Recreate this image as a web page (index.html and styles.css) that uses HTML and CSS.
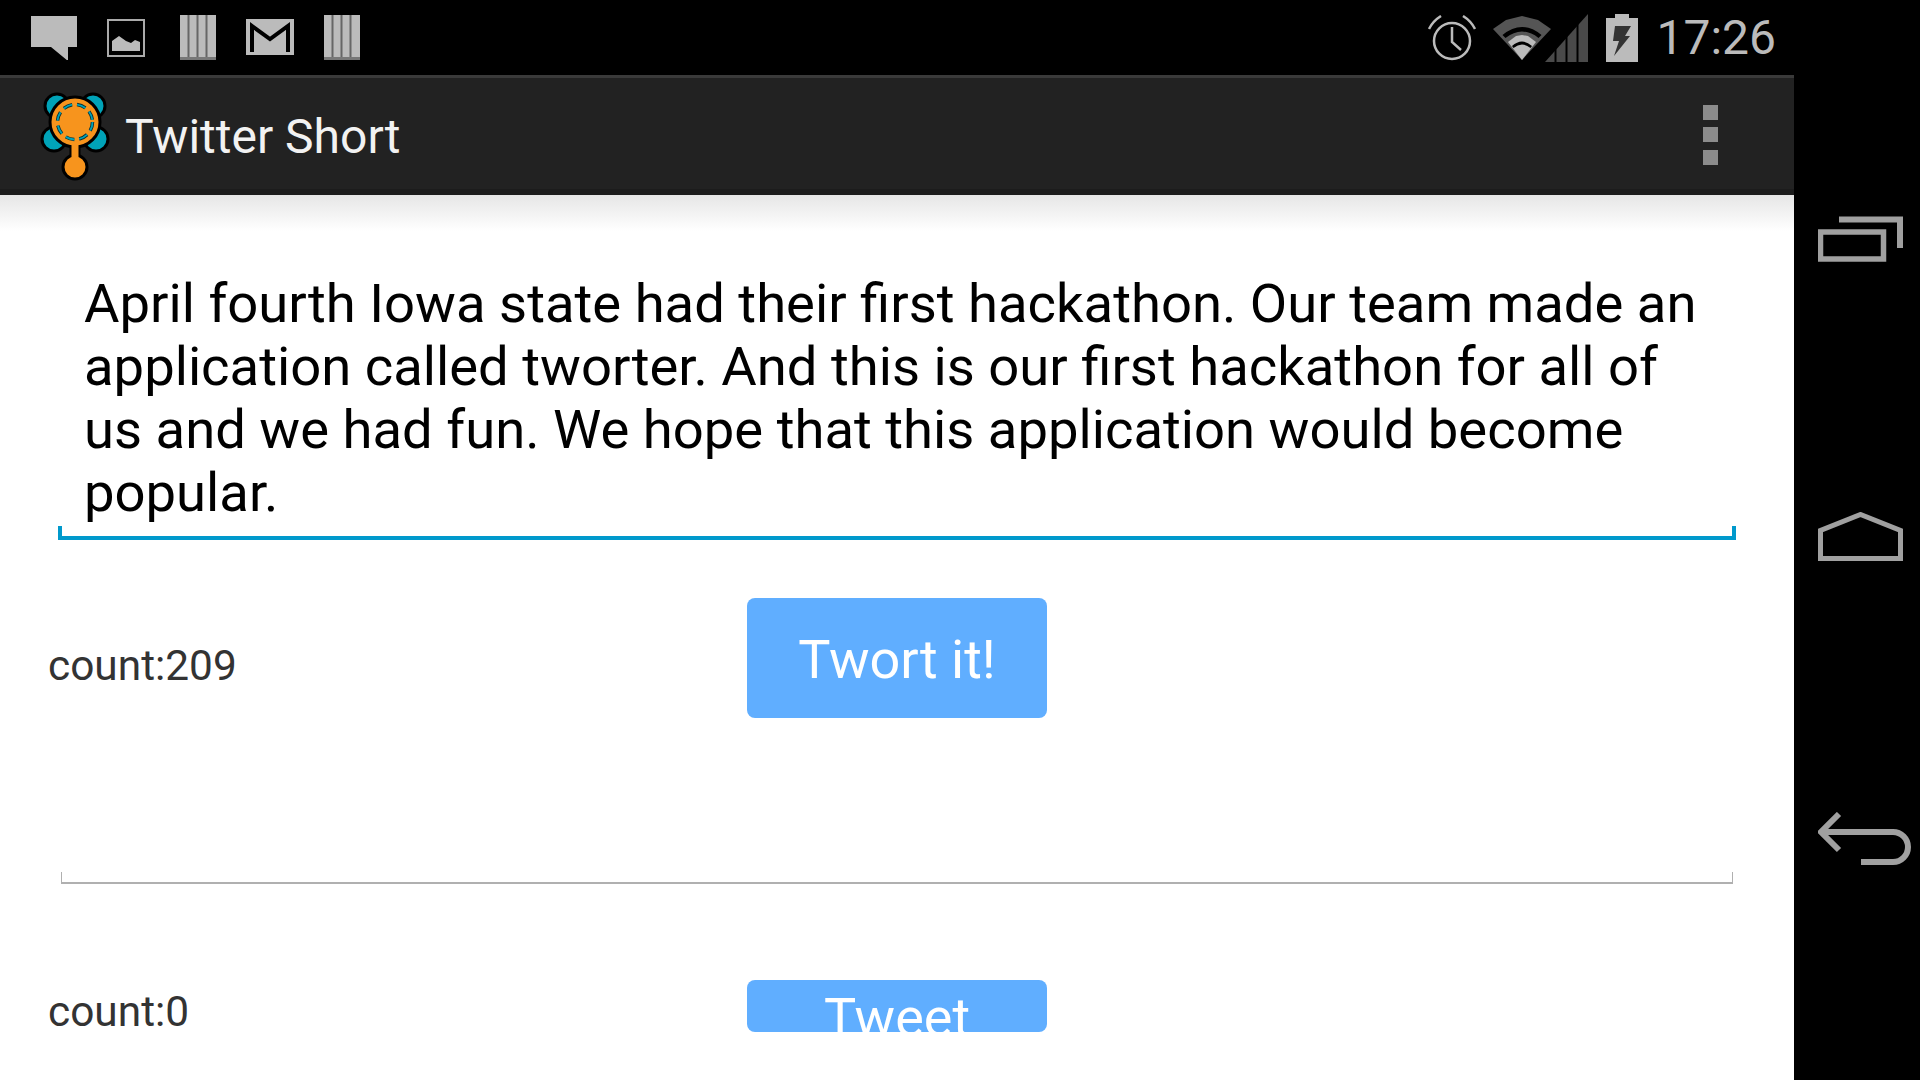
FILE: index.html
```html
<!DOCTYPE html>
<html lang="en">
<head>
    <meta charset="UTF-8">
    <title>Twitter Short</title>
    <link rel="stylesheet" href="styles.css">
</head>
<body>
    <div class="screen">
        <div class="app">
            <header class="status-bar">
                <div class="status-left">
                    <svg class="icon" width="46" height="44" viewBox="0 0 46 44"><polygon points="0,0 46,0 46,31 37,31 37,45 20,31 0,31" fill="#bbb"/></svg>
                    <svg class="icon icon-image" width="38" height="38" viewBox="0 0 38 38"><rect x="1" y="1" width="36" height="36" fill="none" stroke="#aaa" stroke-width="2"/><polygon points="5,32 5,22 12,17 19,22 24,24 28,21 33,23 33,32" fill="#bbb"/></svg>
                    <svg class="icon icon-bars icon-bars-first" width="36" height="45" viewBox="0 0 36 45"><rect width="36" height="45" fill="#bbb"/><path d="M8.5 0V45M17.5 0V45M26.5 0V45" stroke="#666" stroke-width="2"/><rect y="42" width="36" height="3" fill="#777"/></svg>
                    <svg class="icon icon-mail" width="48" height="36" viewBox="0 0 48 36"><rect width="48" height="36" fill="#bbb"/><path d="M6 33V7L24 20L42 7V33" fill="none" stroke="#000" stroke-width="4"/></svg>
                    <svg class="icon icon-bars" width="36" height="45" viewBox="0 0 36 45"><rect width="36" height="45" fill="#bbb"/><path d="M8.5 0V45M17.5 0V45M26.5 0V45" stroke="#666" stroke-width="2"/><rect y="42" width="36" height="3" fill="#777"/></svg>
                </div>
                <div class="status-right">
                    <svg class="icon" width="48" height="46" viewBox="0 0 48 46"><circle cx="24" cy="26" r="18" fill="none" stroke="#bbb" stroke-width="2.5"/><path d="M24 12V27L33 35" fill="none" stroke="#bbb" stroke-width="2.5"/><path d="M1 14Q5 6 13 1M47 14Q43 6 35 1" fill="none" stroke="#bbb" stroke-width="2.5"/></svg>
                    <svg class="icon icon-wifi" width="58" height="44" viewBox="0 0 58 44"><polygon points="0,13 13,4 29,0 45,4 58,13 29,44" fill="#555"/><path d="M9.5 19Q29 3 48.5 19L45.5 22Q29 9 12.5 22Z" fill="#000"/><polygon points="15,26 23,20 29,19 35,20 43,26 29,44" fill="#bbb"/><path d="M19 30Q29 21 39 30L37.500 32Q29 25 20.500 32Z" fill="#000"/></svg>
                    <svg class="icon icon-signal" width="43" height="48" viewBox="0 0 43 48"><polygon points="0,48 43,0 43,48" fill="#4a4a4a"/><path d="M10.500 48V30M21.500 48V20M32.500 48V8" stroke="#000" stroke-width="2"/></svg>
                    <svg class="icon icon-battery" width="32" height="48" viewBox="0 0 32 48"><path d="M9 0H23V4H32V48H0V4H9Z" fill="#bbb"/><polygon points="9,12 25,12 19,22 24,22 8,42 13,27 7,27" fill="#333"/></svg>
                    <span class="clock">17:26</span>
                </div>
            </header>

            <div class="action-bar">
                <svg class="logo" width="70" height="90" viewBox="0 0 70 90">
                    <g fill="#00a3b8" stroke="#000" stroke-width="3">
                        <circle cx="17" cy="15" r="12"/>
                        <circle cx="53" cy="15" r="12"/>
                        <circle cx="14" cy="48" r="12"/>
                        <circle cx="56" cy="48" r="12"/>
                    </g>
                    <g fill="#f7941d" stroke="#000" stroke-width="3">
                        <path d="M31 50H39V72H31Z"/>
                        <circle cx="35" cy="76" r="12"/>
                        <circle cx="35" cy="31" r="25"/>
                    </g>
                    <path d="M31.500 52H38.500V68H31.500Z" fill="#f7941d"/>
                    <circle cx="35" cy="31" r="17.500" fill="none" stroke="#0b2e33" stroke-width="3.500" stroke-dasharray="9 5"/>
                    <circle cx="35" cy="31" r="17.500" fill="none" stroke="#00a3b8" stroke-width="1.800" stroke-dasharray="9 5"/>
                </svg>
                <h1 class="app-title">Twitter Short</h1>
                <div class="overflow-menu"><span></span><span></span><span></span></div>
            </div>

            <main class="content">
                <div class="field field-focused">April fourth Iowa state had their first hackathon. Our team made an application called tworter. And this is our first hackathon for all of us and we had fun. We hope that this application would become popular.</div>
                <div class="action-row">
                    <span class="count">count:209</span>
                    <button class="btn">Twort it!</button>
                </div>
                <div class="field field-empty"></div>
                <div class="action-row action-row-last">
                    <span class="count">count:0</span>
                    <button class="btn btn-clipped">Tweet</button>
                </div>
            </main>
        </div>

        <nav class="nav-bar">
            <svg width="85" height="46" viewBox="0 0 85 46"><path d="M21 3.500H82V32" fill="none" stroke="#a0a0a0" stroke-width="6"/><rect x="2.500" y="16" width="63" height="27" fill="none" stroke="#a0a0a0" stroke-width="5.500"/></svg>
            <svg width="85" height="49" viewBox="0 0 85 49"><path d="M2.500 46.500V18.500L42.500 2.500L82.500 18.500V46.500Z" fill="none" stroke="#a0a0a0" stroke-width="5"/></svg>
            <svg class="nav-back" width="94" height="54" viewBox="0 0 94 54"><path d="M21 2L3 20L21 38M3 20H75A15 15 0 0 1 75 50H43" fill="none" stroke="#a0a0a0" stroke-width="6"/></svg>
        </nav>
    </div>
</body>
</html>
```

FILE: styles.css
```css
html, body {
    margin: 0;
    padding: 0;
    height: 1080px;
    overflow: hidden;
    background-color: #000;
    font-family: 'Roboto', sans-serif;
}
.screen {
    display: flex;
    height: 1080px;
}
.app {
    width: 1794px;
    display: flex;
    flex-direction: column;
}
.icon {
    display: block;
}

/* status bar */
.status-bar {
    height: 75px;
    background-color: #000;
    display: flex;
    justify-content: space-between;
    align-items: center;
    padding: 0 18px 0 31px;
}
.status-left {
    display: flex;
    align-items: flex-start;
    gap: 30px;
    height: 75px;
    padding-top: 16px;
    box-sizing: border-box;
}
.icon-image { margin-top: 3px; }
.icon-bars { margin-top: -1px; }
.icon-bars-first { margin-left: 5px; }
.icon-mail { margin-top: 3px; }
.status-right {
    display: flex;
    align-items: center;
    gap: 15px;
}
.icon-wifi { margin-left: 2px; }
.icon-signal { margin-left: -21px; }
.icon-battery { margin-left: 3px; }
.clock {
    font-size: 48px;
    font-weight: 400;
    color: #bbb;
    margin-left: 3px;
}

/* action bar */
.action-bar {
    height: 120px;
    box-sizing: border-box;
    background-color: #222;
    border-top: 3px solid #3a3a3a;
    border-bottom: 6px solid #1c1c1c;
    display: flex;
    align-items: center;
    padding: 0 76px 0 40px;
}
.logo {
    display: block;
    margin-top: 4px;
}
.app-title {
    margin: 6px 0 0 15px;
    font-size: 48px;
    font-weight: 400;
    color: #f2f2f2;
}
.overflow-menu {
    margin: 2px 0 0 auto;
    display: flex;
    flex-direction: column;
    gap: 7.5px;
}
.overflow-menu span {
    width: 15px;
    height: 15px;
    background-color: #8c8c8c;
}

/* main content */
.content {
    flex: 1;
    overflow: hidden;
    padding-top: 77px;
    background: linear-gradient(to bottom, #e6e6e6 0, #fff 36px) #fff;
}
.field {
    position: relative;
    margin: 0 58px;
    padding: 0 26px 12px;
    font-size: 54.4px;
    line-height: 63px;
    color: #000;
    border-bottom: 4px solid #0099cc;
}
.field::before,
.field::after {
    content: "";
    position: absolute;
    bottom: 0;
    width: 4px;
    height: 10px;
    background-color: #0099cc;
}
.field::before { left: 0; }
.field::after { right: 0; }
.field-empty {
    margin: 0 61px;
    height: 10px;
    padding: 0;
    border-bottom: 2px solid #b0b0b0;
}
.field-empty::before,
.field-empty::after {
    width: 1px;
    background-color: #b0b0b0;
}
.action-row {
    display: grid;
    grid-template-columns: 1fr 300px 1fr;
    align-items: start;
    margin: 58px 0 154px;
}
.action-row-last {
    margin: 96px 0 0;
}
.count {
    grid-column: 1;
    margin: 43px 0 0 48px;
    font-size: 42.4px;
    line-height: 50px;
    color: #333;
}
.action-row-last .count {
    margin-top: 7px;
}
.btn {
    grid-column: 2;
    height: 120px;
    border: 0;
    border-radius: 8px;
    padding: 2px 0 0;
    background-color: #60aeff;
    color: #fff;
    font-family: 'Roboto', sans-serif;
    font-size: 54px;
    font-weight: 400;
}
.btn-clipped {
    height: 52px;
    overflow: hidden;
    display: flex;
    justify-content: center;
    align-items: flex-start;
    padding: 0;
    line-height: 76px;
}

/* system navigation */
.nav-bar {
    width: 126px;
    box-sizing: border-box;
    background-color: #000;
    display: flex;
    flex-direction: column;
    align-items: flex-start;
    padding: 216px 0 0 24px;
    gap: 250px;
}
.nav-bar svg {
    display: block;
}
.nav-bar .nav-back {
    margin-top: 1px;
}
```
